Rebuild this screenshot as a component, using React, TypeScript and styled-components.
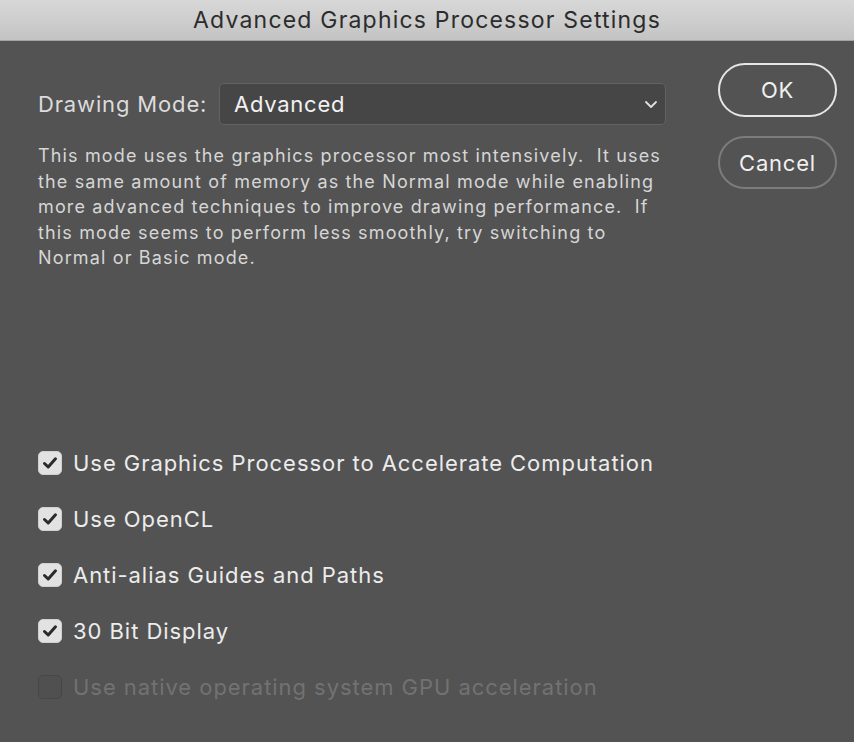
import * as React from 'react';
import styled, { createGlobalStyle } from 'styled-components';

const GlobalStyle = createGlobalStyle`
  html, body {
    margin: 0;
    padding: 0;
    background: #535353;
  }
  body {
    font-family: Inter, "Open Sans", "Liberation Sans", sans-serif;
  }
`;

const Window = styled.div`
  width: 854px;
  height: 742px;
  display: flex;
  flex-direction: column;
  background: #535353;
  overflow: hidden;
`;

const TitleBar = styled.div`
  height: 40px;
  flex-shrink: 0;
  display: flex;
  align-items: center;
  justify-content: center;
  background: linear-gradient(#d8d8d8, #c3c3c3);
  border-bottom: 1px solid #a4a4a4;
  color: #2c2c2c;
  font-size: 23px;
  letter-spacing: 1.2px;
`;

const Body = styled.div`
  flex: 1;
  display: flex;
  padding: 22px 18px 0 38px;
`;

const MainColumn = styled.div`
  width: 628px;
  flex-shrink: 0;
  display: flex;
  flex-direction: column;
`;

const ModeRow = styled.div`
  display: flex;
  align-items: center;
  margin-top: 20px;
  height: 42px;
`;

const Label = styled.span`
  color: #dcdcdc;
  font-size: 22px;
  letter-spacing: 0.85px;
  width: 181px;
  flex-shrink: 0;
`;

const Select = styled.div`
  flex: 1;
  height: 42px;
  box-sizing: border-box;
  display: flex;
  align-items: center;
  justify-content: space-between;
  padding: 0 7px 0 14px;
  background: #464646;
  border: 1px solid #636363;
  border-radius: 5px;
  color: #f2f2f2;
  font-size: 22px;
  letter-spacing: 0.75px;
`;

const Description = styled.p`
  margin: 18px 0 0;
  color: #d6d6d6;
  font-size: 18px;
  line-height: 25.5px;
  letter-spacing: 1.15px;
  white-space: pre-line;
`;

const Options = styled.div`
  margin-top: auto;
  padding-bottom: 27px;
  display: flex;
  flex-direction: column;
`;

const OptionRow = styled.label<{ $disabled?: boolean }>`
  height: 56px;
  display: flex;
  align-items: center;
  gap: 11px;
  color: ${p => (p.$disabled ? '#727272' : '#ececec')};
  font-size: 22px;
  letter-spacing: 0.95px;
`;

const Box = styled.span<{ $checked: boolean }>`
  width: 24px;
  height: 24px;
  box-sizing: border-box;
  border-radius: 5px;
  display: flex;
  align-items: center;
  justify-content: center;
  background: ${p => (p.$checked ? '#e2e2e2' : '#505050')};
  border: 1px solid ${p => (p.$checked ? '#d0d0d0' : '#474747')};
`;

const ButtonColumn = styled.div`
  margin-left: 52px;
  display: flex;
  flex-direction: column;
  gap: 19px;
`;

const Button = styled.button<{ $primary?: boolean }>`
  width: 119px;
  height: 54px;
  border-radius: 27px;
  background: transparent;
  border: 2px solid ${p => (p.$primary ? '#e6e6e6' : '#7c7c7c')};
  color: #f0f0f0;
  font-family: inherit;
  font-size: 22px;
  letter-spacing: 0.8px;
  padding: 0;
  &:last-child {
    height: 53px;
  }
`;

const Check = () => (
  <svg width="16" height="14" viewBox="0 0 16 14">
    <path d="M2.5 7.5 L6.2 11 L13.5 2.8" fill="none" stroke="#2a2a2a" strokeWidth="3" strokeLinecap="round" strokeLinejoin="round" />
  </svg>
);

const Chevron = () => (
  <svg width="14" height="9" viewBox="0 0 14 9">
    <path d="M2 2 L7 7 L12 2" fill="none" stroke="#e0e0e0" strokeWidth="1.8" strokeLinecap="round" strokeLinejoin="round" />
  </svg>
);

const options = [
  { text: 'Use Graphics Processor to Accelerate Computation', checked: true },
  { text: 'Use OpenCL', checked: true },
  { text: 'Anti-alias Guides and Paths', checked: true },
  { text: '30 Bit Display', checked: true },
  { text: 'Use native operating system GPU acceleration', checked: false, disabled: true },
];

export default function App() {
  return (
    <>
      <GlobalStyle />
      <Window>
        <TitleBar>Advanced Graphics Processor Settings</TitleBar>
        <Body>
          <MainColumn>
            <ModeRow>
              <Label>Drawing Mode:</Label>
              <Select>
                <span>Advanced</span>
                <Chevron />
              </Select>
            </ModeRow>
            <Description>
              {'This mode uses the graphics processor most intensively.\u00a0 It uses\nthe same amount of memory as the Normal mode while enabling\nmore advanced techniques to improve drawing performance.\u00a0 If\nthis mode seems to perform less smoothly, try switching to\nNormal or Basic mode.'}
            </Description>
            <Options>
              {options.map((o, i) => (
                <OptionRow key={i} $disabled={o.disabled}>
                  <Box $checked={o.checked}>{o.checked && <Check />}</Box>
                  {o.text}
                </OptionRow>
              ))}
            </Options>
          </MainColumn>
          <ButtonColumn>
            <Button $primary>OK</Button>
            <Button>Cancel</Button>
          </ButtonColumn>
        </Body>
      </Window>
    </>
  );
}
